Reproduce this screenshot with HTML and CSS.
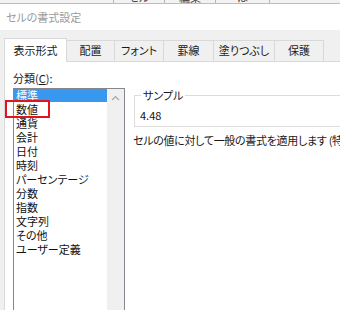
FILE: index.html
```html
<!DOCTYPE html>
<html lang="ja">
<head>
    <meta charset="UTF-8">
    <title>セルの書式設定</title>
    <link rel="stylesheet" href="styles.css">
</head>
<body>
    <div class="sheet-strip">
        <div class="strip-cell strip-first"></div>
        <div class="strip-cell">セル</div>
        <div class="strip-cell">編集</div>
        <div class="strip-cell">ほ</div>
        <div class="strip-cell strip-rest"></div>
    </div>
    <div class="dialog-title">セルの書式設定</div>

    <div class="dialog-body">
        <div class="tabs">
            <div class="tab active">表示形式</div>
            <div class="tab w-haichi">配置</div>
            <div class="tab w-font">フォント</div>
            <div class="tab w-keisen">罫線</div>
            <div class="tab w-nuri">塗りつぶし</div>
            <div class="tab w-hogo">保護</div>
        </div>

        <div class="panel">
            <div class="category">
                <div class="field-label">分類(<u>C</u>):</div>
                <div class="listbox">
                    <ul class="items">
                        <li class="selected">標準</li>
                        <li>数値</li>
                        <li>通貨</li>
                        <li>会計</li>
                        <li>日付</li>
                        <li>時刻</li>
                        <li>パーセンテージ</li>
                        <li>分数</li>
                        <li>指数</li>
                        <li>文字列</li>
                        <li>その他</li>
                        <li>ユーザー定義</li>
                    </ul>
                    <div class="scrollbar">
                        <svg class="arrow-up" width="9" height="6" viewBox="0 0 9 6">
                            <path d="M1 5 L4.5 1.5 L8 5" fill="none" stroke="#a6a6a6" stroke-width="1.2"/>
                        </svg>
                    </div>
                </div>
            </div>

            <div class="detail">
                <fieldset class="sample">
                    <legend>サンプル</legend>
                    <div class="sample-value">4.48</div>
                </fieldset>
                <p class="desc">セルの値に対して一般の書式を適用します (特定の書式は設定されません)。</p>
            </div>
        </div>
    </div>

    <!-- annotation around 数値 -->
    <div class="highlight"></div>
</body>
</html>
```

FILE: styles.css
```css
/* General */
body {
    margin: 0;
    width: 340px;
    height: 310px;
    overflow: hidden;
    background: #fff;
    font-family: "Noto Sans CJK JP", "Noto Sans", sans-serif;
    font-feature-settings: "palt";
    font-size: 11px;
    color: #111;
}

/* Excel ribbon remains above the dialog */
.sheet-strip {
    display: flex;
    height: 3px;
    overflow: hidden;
    background: #f2f2f2;
    border-bottom: 1px solid #bdbdbd;
}

.strip-cell {
    width: 50px;
    border-left: 1px solid #b5b5b5;
    line-height: 12px;
    margin-top: -9px;
    text-align: center;
    color: #444;
}

.strip-first {
    width: 113px;
    border-left: none;
}

.strip-cell:nth-child(4) {
    width: 53px;
}

.strip-rest {
    flex: 1;
}

.dialog-title {
    height: 26px;
    line-height: 26px;
    padding-left: 6px;
    color: #9b9b9b;
}

.dialog-body {
    background: #f0f0f0;
    padding: 8px 0 0 4px;
    height: 272px;
}

/* Tabs */
.tabs {
    display: flex;
    align-items: flex-end;
    height: 23px;
}

.tab {
    box-sizing: border-box;
    height: 21px;
    line-height: 19px;
    margin-left: -1px;
    border: 1px solid #d9d9d9;
    border-bottom: none;
    background: #f0f0f0;
    text-align: center;
    color: #1a1a1a;
}

.tab.active {
    width: 63px;
    height: 24px;
    line-height: 22px;
    margin-left: 0;
    margin-bottom: -1px;
    background: #fff;
    position: relative;
    z-index: 1;
}

.w-haichi { width: 49px; }
.w-font { width: 50px; }
.w-keisen { width: 51px; }
.w-nuri { width: 62px; }
.w-hogo { width: 50px; }

/* Panel */
.panel {
    display: flex;
    height: 249px;
    background: #fff;
    border-top: 1px solid #d9d9d9;
    border-left: 1px solid #d9d9d9;
}

.category {
    padding: 9px 0 0 8px;
}

.field-label {
    line-height: 14px;
    color: #1a1a1a;
}

.listbox {
    box-sizing: border-box;
    display: flex;
    width: 112px;
    height: 240px;
    margin-top: 3px;
    border: 1px solid #828790;
    overflow: hidden;
}

.items {
    list-style: none;
    margin: -1px 0 0;
    padding: 0;
    width: 93px;
}

.items li {
    height: 14px;
    line-height: 14px;
    padding-left: 2px;
    white-space: nowrap;
    color: #111;
}

.items li.selected {
    background: #3898f0;
    color: #fff;
}

.scrollbar {
    width: 17px;
    background: #f0f0f0;
    display: flex;
    justify-content: center;
    padding-top: 6px;
    box-sizing: border-box;
}

.arrow-up {
    display: block;
}

/* Sample + description */
.detail {
    padding: 26px 0 0 8px;
    flex: none;
    width: 260px;
}

.sample {
    margin: 0 0 0 1px;
    padding: 6px 5px 4px;
    border: 1px solid #dcdcdc;
}

.sample legend {
    padding: 0 2px;
    margin-left: 1px;
    line-height: 14px;
    color: #1a1a1a;
}

.sample-value {
    line-height: 14px;
}

.desc {
    margin: 6px 0 0;
    line-height: 14px;
    letter-spacing: -0.3px;
    white-space: nowrap;
    color: #1a1a1a;
}

.highlight {
    position: absolute;
    left: 5px;
    top: 100px;
    width: 45px;
    height: 18px;
    box-sizing: border-box;
    border: 2px solid #e3141d;
}
```
